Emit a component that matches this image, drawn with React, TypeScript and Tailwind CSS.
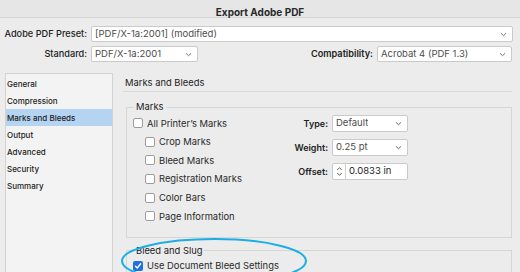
import React from 'react';

const SIDEBAR = ['General', 'Compression', 'Marks and Bleeds', 'Output', 'Advanced', 'Security', 'Summary'];

const MARKS = ['Crop Marks', 'Bleed Marks', 'Registration Marks', 'Color Bars', 'Page Information'];

function Chevron() {
  return (
    <svg width="7" height="5" viewBox="0 0 7 5" className="shrink-0">
      <path d="M1 1.3 L3.5 3.7 L6 1.3" fill="none" stroke="#707070" strokeWidth="1" />
    </svg>
  );
}

function Select({ value, className = '' }: { value: string; className?: string }) {
  return (
    <div
      className={`flex h-[16px] items-center justify-between rounded-[2px] border border-[#cacaca] bg-white pl-[3px] pr-[5px] ${className}`}
    >
      <span className="truncate text-[9.5px] leading-none text-[#4d4d4d]">{value}</span>
      <Chevron />
    </div>
  );
}

function Checkbox({ checked = false }: { checked?: boolean }) {
  if (checked) {
    return (
      <span className="flex h-[10px] w-[10px] shrink-0 items-center justify-center rounded-[2px] bg-[#1e6fe3]">
        <svg width="8" height="8" viewBox="0 0 8 8">
          <path d="M1.5 4.2 L3.3 6 L6.6 1.8" fill="none" stroke="white" strokeWidth="1.4" strokeLinecap="round" strokeLinejoin="round" />
        </svg>
      </span>
    );
  }
  return <span className="h-[10px] w-[10px] shrink-0 rounded-[2px] border border-[#9c9c9c] bg-white" />;
}

function CheckRow({ label, checked, indent }: { label: string; checked?: boolean; indent?: boolean }) {
  return (
    <div className={`flex h-[18.6px] items-center gap-[4px] ${indent ? 'pl-[12px]' : ''}`}>
      <Checkbox checked={checked} />
      <span className="text-[9.4px] leading-none text-[#2a2a2a]">{label}</span>
    </div>
  );
}

function FieldLabel({ children }: { children: React.ReactNode }) {
  return (
    <span className="w-[60px] pr-[4px] text-right text-[9px] font-semibold leading-none text-[#222]">
      {children}
    </span>
  );
}

export default function App() {
  return (
    <div className="relative flex h-[272px] w-[520px] flex-col overflow-hidden bg-[#ececec] font-['Inter',sans-serif] text-[#222]">
      <div className="flex h-[18px] shrink-0 items-end justify-center border-b border-[#d5d5d5] bg-[#e6e6e6]">
        <span className="text-[10px] font-bold leading-[9px] text-[#2a2a2a]">Export Adobe PDF</span>
      </div>

      <div className="mt-[8px] flex items-center pr-[7px]">
        <span className="w-[87px] text-right text-[9.2px] font-medium leading-none">Adobe PDF Preset:</span>
        <Select value="[PDF/X-1a:2001] (modified)" className="ml-[4px] flex-1" />
      </div>

      <div className="mt-[4px] flex items-center pr-[8px]">
        <span className="w-[87px] text-right text-[9.2px] font-medium leading-none">Standard:</span>
        <Select value="PDF/X-1a:2001" className="ml-[4px] w-[107px]" />
        <span className="flex-1 text-right text-[9.2px] font-semibold leading-none">Compatibility:</span>
        <Select value="Acrobat 4 (PDF 1.3)" className="ml-[4px] w-[135px]" />
      </div>

      <div className="mt-[11px] flex">
        <div className="ml-[5px] h-[230px] w-[108px] shrink-0 border border-[#d3d3d3] bg-[#f3f3f3] pt-[1px]">
          {SIDEBAR.map((item) => (
            <div
              key={item}
              className={`flex h-[17px] items-center pl-[1px] text-[8px] font-medium leading-none text-[#1c1c1c] ${
                item === 'Marks and Bleeds' ? 'bg-[#b5d4f2]' : ''
              }`}
            >
              {item}
            </div>
          ))}
        </div>

        <div className="ml-[10px] mr-[8px] flex-1">
          <div className="flex h-[19px] items-center border-b border-[#d9d9d9] pl-[2px] pt-[2px] text-[9.4px] leading-none">
            Marks and Bleeds
          </div>

          <fieldset className="ml-[3px] mt-[9px] border border-[#d6d6d6] pb-[11px]">
            <legend className="ml-[7px] px-[2px] text-[9.4px] leading-[12px]">Marks</legend>
            <div className="flex">
              <div className="w-[145px] pl-[6px] pt-[1px]">
                <CheckRow label="All Printer’s Marks" />
                {MARKS.map((m) => (
                  <CheckRow key={m} label={m} indent />
                ))}
              </div>
              <div className="flex flex-col gap-[7px] pt-[1.5px]">
                <div className="flex h-[17px] items-center">
                  <FieldLabel>Type:</FieldLabel>
                  <Select value="Default" className="h-[17px] w-[76px]" />
                </div>
                <div className="flex h-[17px] items-center">
                  <FieldLabel>Weight:</FieldLabel>
                  <Select value="0.25 pt" className="h-[17px] w-[76px]" />
                </div>
                <div className="flex h-[17px] items-center">
                  <FieldLabel>Offset:</FieldLabel>
                  <div className="flex h-[17px] w-[76px] items-center rounded-[2px] border border-[#cacaca] bg-white">
                    <div className="flex h-full w-[13px] items-center justify-center border-r border-[#d0d0d0]">
                      <svg width="7" height="11" viewBox="0 0 7 11">
                        <path d="M1.2 4 L3.5 1.6 L5.8 4 M1.2 7 L3.5 9.4 L5.8 7" fill="none" stroke="#666" strokeWidth="1" />
                      </svg>
                    </div>
                    <span className="pl-[3px] text-[9.5px] leading-none text-[#222]">0.0833 in</span>
                  </div>
                </div>
              </div>
            </div>
          </fieldset>

          <fieldset className="ml-[3px] mt-[7px] h-[60px] border border-[#d6d6d6]">
            <legend className="ml-[7px] px-[2px] text-[9.4px] leading-[12px]">Bleed and Slug</legend>
            <div className="pl-[6px]">
              <div className="flex h-[18px] items-center gap-[4px]">
                <Checkbox checked />
                <span className="text-[9.4px] leading-none text-[#2a2a2a]">Use Document Bleed Settings</span>
              </div>
            </div>
          </fieldset>
        </div>
      </div>

      <svg className="pointer-events-none absolute left-0 top-0" width="520" height="272">
        <ellipse cx="214" cy="261" rx="92" ry="22" fill="none" stroke="#1aaee6" strokeWidth="2" />
      </svg>
    </div>
  );
}
